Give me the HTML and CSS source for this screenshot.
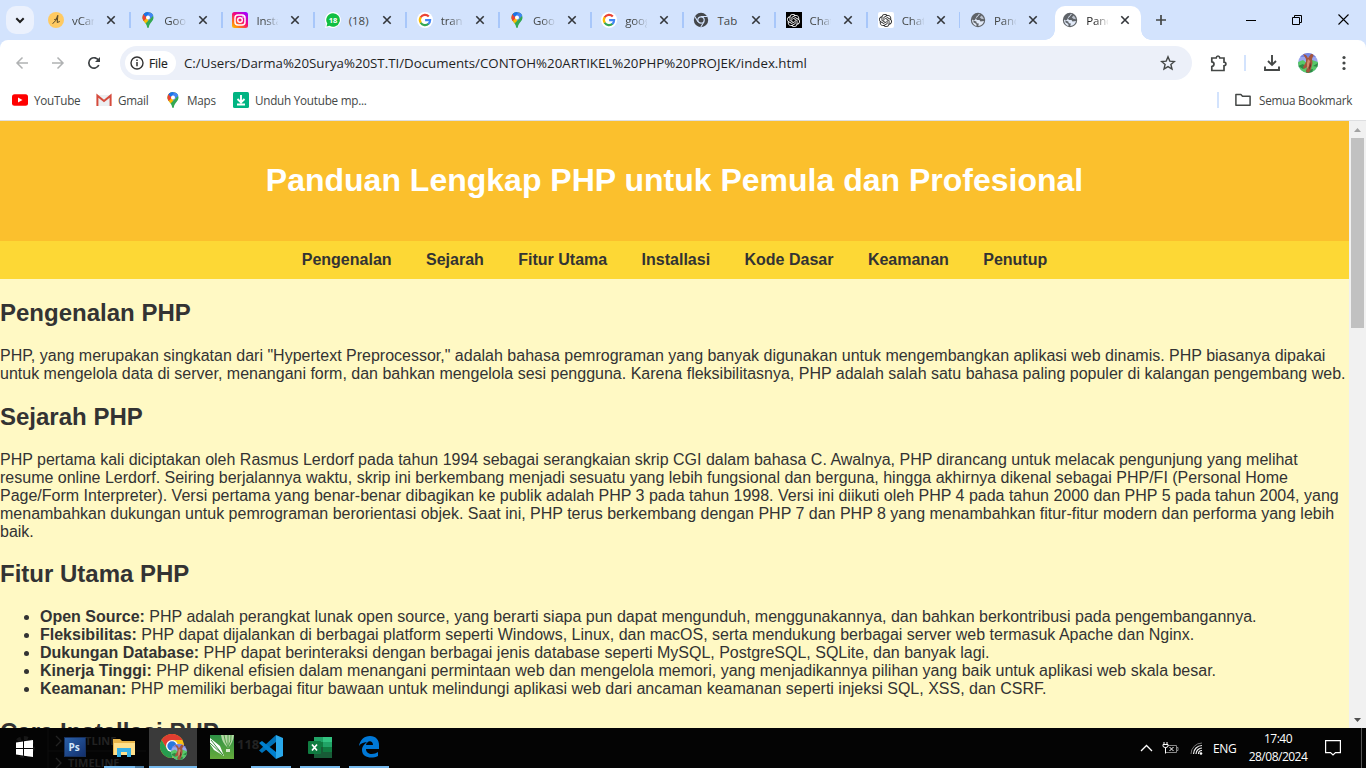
FILE: index.html
```html
<!DOCTYPE html>
<html lang="id">
<head>
<meta charset="utf-8">
<title>Panduan Lengkap PHP</title>
<link rel="stylesheet" href="styles.css">
</head>
<body>
<svg class="defs" width="0" height="0">
  <symbol id="maps" viewBox="0 0 16 16">
    <clipPath id="pin"><path d="M8 0a5.5 5.5 0 0 0-5.5 5.5C2.500 9.300 6.300 10.500 7.200 15.200Q8 17 8.800 15.200C9.700 10.500 13.500 9.300 13.500 5.500A5.500 5.500 0 0 0 8 0z"/></clipPath>
    <g clip-path="url(#pin)"><path fill="#34a853" d="M0 0h16v16H0z"/><path fill="#fbbc04" d="M0 12 11 0 5 0 0 7z"/><path fill="#fbbc04" d="M2 9 8 3l3 3-7 7z"/><path fill="#ea4335" d="M0 0h4l4.500 4-6 6.500z"/><path fill="#4285f4" d="M3.800 1.500 5 0h9l-4 6L7.500 5z"/><path fill="#1a73e8" d="M3 2 6 5 9 1 6-1z"/><path fill="#4285f4" d="M8 6 12 1l2 2-6 6z"/></g><circle cx="8" cy="5.500" r="2" fill="#fff"/>
  </symbol>
  <symbol id="google" viewBox="0 0 16 16"><circle cx="8" cy="8" r="8" fill="#fff"/><g fill="none" stroke-width="2.200"><path stroke="#fbbc04" d="M3.900 11A5.100 5.100 0 0 1 3.900 5"/><path stroke="#ea4335" d="M3.700 5.300A5.100 5.100 0 0 1 11.800 4.500"/><path stroke="#34a853" d="M3.700 10.700A5.100 5.100 0 0 0 11.600 11.700"/><path stroke="#4285f4" d="M8.100 8.200H13.100A5.100 5.100 0 0 1 11.300 12"/></g></symbol>
  <symbol id="globe" viewBox="0 0 16 16"><circle cx="8" cy="8" r="7.200" fill="#5f6368"/><path fill="#e2eaf8" d="M10.200 1.800C7.500 2.200 8.500 3.500 7.300 4 6 4.500 6.500 6 5.500 6.300L7 8.100 9.500 8 10.500 9.500 13.900 9C13.500 11.800 11 14 8.300 13.900L8.800 11.500 6.800 11.300 6.300 9.600 4 8.700 2.100 7.400C1.800 10.500 4 13.200 6.500 13.900L6.300 12 3 10z"/><path fill="#e2eaf8" d="M9.800 5.200 11.800 3.500 13.500 6 13.800 7.300 11.200 6.800z" opacity=".7"/></symbol>
  <symbol id="openai" viewBox="0 0 24 24"><path fill="currentColor" d="M22.2819 9.8211a5.9847 5.9847 0 0 0-.5157-4.9108 6.0462 6.0462 0 0 0-6.5098-2.9A6.0651 6.0651 0 0 0 4.9807 4.1818a5.9847 5.9847 0 0 0-3.9977 2.9 6.0462 6.0462 0 0 0 .7427 7.0966 5.98 5.98 0 0 0 .511 4.9107 6.051 6.051 0 0 0 6.5146 2.9001A5.9847 5.9847 0 0 0 13.2599 24a6.0557 6.0557 0 0 0 5.7718-4.2058 5.9894 5.9894 0 0 0 3.9977-2.9001 6.0557 6.0557 0 0 0-.7475-7.0729zm-9.022 12.6081a4.4755 4.4755 0 0 1-2.8764-1.0408l.1419-.0804 4.7783-2.7582a.7948.7948 0 0 0 .3927-.6813v-6.7369l2.02 1.1686a.071.071 0 0 1 .038.052v5.5826a4.504 4.504 0 0 1-4.4945 4.4944zm-9.6607-4.1254a4.4708 4.4708 0 0 1-.5346-3.0137l.142.0852 4.783 2.7582a.7712.7712 0 0 0 .7806 0l5.8428-3.3685v2.3324a.0804.0804 0 0 1-.0332.0615L9.74 19.9502a4.4992 4.4992 0 0 1-6.1408-1.6464zM2.3408 7.8956a4.485 4.485 0 0 1 2.3655-1.9728V11.6a.7664.7664 0 0 0 .3879.6765l5.8144 3.3543-2.0201 1.1685a.0757.0757 0 0 1-.071 0l-4.8303-2.7865A4.504 4.504 0 0 1 2.3408 7.872zm16.5963 3.8558L13.1038 8.364 15.1192 7.2a.0757.0757 0 0 1 .071 0l4.8303 2.7913a4.4944 4.4944 0 0 1-.6765 8.1042v-5.6772a.79.79 0 0 0-.407-.667zm2.0107-3.0231l-.142-.0852-4.7735-2.7818a.7759.7759 0 0 0-.7854 0L9.409 9.2297V6.8974a.0662.0662 0 0 1 .0284-.0615l4.8303-2.7866a4.4992 4.4992 0 0 1 6.6802 4.66zM8.3065 12.863l-2.02-1.1638a.0804.0804 0 0 1-.038-.0567V6.0742a4.4992 4.4992 0 0 1 7.3757-3.4537l-.142.0805L8.704 5.459a.7948.7948 0 0 0-.3927.6813zm1.0976-2.3654l2.602-1.4998 2.6069 1.4998v2.9994l-2.5974 1.4997-2.6067-1.4997Z"/></symbol>
  <symbol id="x" viewBox="0 0 10 10"><path d="M1.300 1.300 8.700 8.700M8.700 1.300 1.300 8.700" stroke="currentColor" stroke-width="1.600" fill="none"/></symbol>
  <symbol id="photo" viewBox="0 0 20 20"><clipPath id="pc"><circle cx="10" cy="10" r="10"/></clipPath><g clip-path="url(#pc)"><path fill="#9aa6ee" d="M0 0h20v20H0z"/><path fill="#7785e0" d="M0 0h20v4H0z"/><path fill="#57c868" d="M0 9 5 7l4 3 5-3 6 2v11H0z"/><path fill="#2f8a45" d="M0 13l5-2 3 3-3 2zM15 13l5-3v4zM8 17l7-1-1 4H8z"/><path fill="#a4553d" d="M5 1 8 2 10 5 13 1 16 1 14 6 14.500 10 13 16 11 20 8 19 9 14 6 16 5 14 8 9 8 6z"/><path fill="#d48a6b" d="M10 6l2 2-1 5-2 3 0-6z"/><path fill="#5c2a22" d="M12 9l1 4-2 4z"/></g></symbol>
</svg>

<header class="tabstrip">
  <div class="search-tabs"><svg width="10" height="7" viewBox="0 0 10 7"><path d="M1.300 1.300 5 5 8.700 1.300" fill="none" stroke="#1f1f1f" stroke-width="2"/></svg></div>
  <div class="tabs">
    <div class="tab"><svg class="fav" viewBox="0 0 16 16"><circle cx="8" cy="8" r="8" fill="#ffca62"/><path d="M4.500 11.500C7 10.500 8.500 7 9.700 3.300M9.900 3.300 9.200 10.500 11.800 9.500M6 8C7 6.800 8 7.300 9.200 8.200" fill="none" stroke="#584726"/></svg><span class="label">vCard</span><svg class="close"><use href="#x"/></svg><i class="sep"></i></div>
    <div class="tab"><svg class="fav"><use href="#maps"/></svg><span class="label">Goog</span><svg class="close"><use href="#x"/></svg><i class="sep"></i></div>
    <div class="tab"><svg class="fav" viewBox="0 0 16 16"><defs><linearGradient id="ig" x1="0" y1="1" x2=".8" y2="0"><stop offset="0" stop-color="#ffc800"/><stop offset=".3" stop-color="#ff6a20"/><stop offset=".6" stop-color="#f5077d"/><stop offset="1" stop-color="#a400ff"/></linearGradient></defs><rect width="16" height="16" rx="2.500" fill="url(#ig)"/><rect x="3" y="3" width="10" height="10" rx="3" fill="none" stroke="#fff" stroke-width="1.500"/><circle cx="8" cy="8" r="2.300" fill="none" stroke="#fff" stroke-width="1.400"/><circle cx="11" cy="5" r=".8" fill="#fff"/></svg><span class="label">Insta</span><svg class="close"><use href="#x"/></svg><i class="sep"></i></div>
    <div class="tab"><svg class="fav" viewBox="0 0 16 16"><path fill="#fff" d="M8 0a8 8 0 1 1-4 15L0 16 1 12A8 8 0 0 1 8 0z"/><path fill="#11bf42" d="M8 1.200a6.800 6.800 0 1 1-3.500 12.600L1.500 14.500 2.300 11.600A6.800 6.800 0 0 1 8 1.200z"/><text class="badge" x="8" y="11" text-anchor="middle">18</text></svg><span class="label fit">(18)</span><svg class="close"><use href="#x"/></svg><i class="sep"></i></div>
    <div class="tab"><svg class="fav"><use href="#google"/></svg><span class="label">tran</span><svg class="close"><use href="#x"/></svg><i class="sep"></i></div>
    <div class="tab"><svg class="fav"><use href="#maps"/></svg><span class="label">Goog</span><svg class="close"><use href="#x"/></svg><i class="sep"></i></div>
    <div class="tab"><svg class="fav"><use href="#google"/></svg><span class="label">goog</span><svg class="close"><use href="#x"/></svg><i class="sep"></i></div>
    <div class="tab"><svg class="fav" viewBox="0 0 16 16"><circle cx="8" cy="8" r="7.200" fill="#44474b"/><circle cx="8" cy="8" r="3.200" fill="#44474b" stroke="#d3e3fd" stroke-width="1.200"/><path d="M8 4.500H14.500M5 9.800 1.800 4.500M11 9.800 7.800 15" stroke="#d3e3fd" stroke-width="1.100"/></svg><span class="label fit">Tab</span><svg class="close"><use href="#x"/></svg><i class="sep"></i></div>
    <div class="tab"><span class="fav gpt dark"><svg width="13" height="13"><use href="#openai"/></svg></span><span class="label">Chat</span><svg class="close"><use href="#x"/></svg><i class="sep"></i></div>
    <div class="tab"><span class="fav gpt"><svg width="13" height="13"><use href="#openai"/></svg></span><span class="label">Chat</span><svg class="close"><use href="#x"/></svg><i class="sep"></i></div>
    <div class="tab"><svg class="fav"><use href="#globe"/></svg><span class="label">Pand</span><svg class="close"><use href="#x"/></svg></div>
    <div class="tab active"><svg class="fav"><use href="#globe"/></svg><span class="label">Pand</span><svg class="close"><use href="#x"/></svg></div>
  </div>
  <svg class="newtab" width="12" height="12" viewBox="0 0 12 12"><path d="M6 1v10M1 6h10" stroke="#444746" stroke-width="1.700"/></svg>
  <div class="window-buttons">
    <svg width="10" height="11" viewBox="0 0 10 11"><path d="M0 6.500h10" stroke="#000"/></svg>
    <svg width="10" height="11" viewBox="0 0 10 11"><path d="M.5 3.500h7v7h-7zM2.500 3.500v-2h7v7h-2" fill="none" stroke="#000"/></svg>
    <svg width="11" height="11" viewBox="0 0 11 11"><path d="M.5 .5l10 10M10.500 .5l-10 10" stroke="#000" stroke-width="1.100"/></svg>
  </div>
</header>

<section class="toolbar">
  <div class="address-row">
    <svg class="back" width="14" height="14" viewBox="0 0 14 14"><path d="M13 7H2M7.500 1.500 2 7l5.500 5.500" fill="none" stroke="#b0b2b3" stroke-width="1.500"/></svg>
    <svg class="forward" width="14" height="14" viewBox="0 0 14 14"><path d="M1 7h11M6.500 1.500 12 7l-5.500 5.500" fill="none" stroke="#b0b2b3" stroke-width="1.500"/></svg>
    <svg class="reload" width="14" height="14" viewBox="0 0 14 14"><path d="M11.800 9A5.200 5.200 0 1 1 11.700 4.700" fill="none" stroke="#3c4043" stroke-width="1.700"/><path d="M8 6h5V1z" fill="#3c4043"/></svg>
    <div class="omnibox">
      <div class="chip"><svg width="14" height="14" viewBox="0 0 14 14"><circle cx="7" cy="7" r="6" fill="none" stroke="#333" stroke-width="1.400"/><path d="M7 6v4.300M7 3.500v1.400" stroke="#333" stroke-width="1.500"/></svg><span class="chip-text">File</span></div>
      <span class="url">C:/Users/Darma%20Surya%20ST.TI/Documents/CONTOH%20ARTIKEL%20PHP%20PROJEK/index.html</span>
      <svg class="star" width="16" height="16" viewBox="0 0 16 16"><path d="M8 1.800 9.800 6.100 14.400 6.500 10.900 9.500 12 14 8 11.600 4 14 5.100 9.500 1.600 6.500 6.200 6.100z" fill="none" stroke="#444746" stroke-width="1.400"/></svg>
    </div>
    <svg class="puzzle" width="17" height="17" viewBox="0 0 17 17"><path d="M1.800 3h4.400Q6.500 1 8 1T9.800 3H14V7.200Q16 7.500 16 9T14 10.800V15.500H1.800V11.500Q4 11 4 9T1.800 6.800z" fill="none" stroke="#444746" stroke-width="1.700"/></svg>
    <i class="divider"></i>
    <svg class="download" width="16" height="16" viewBox="0 0 16 16"><path d="M8 0v9.500M4 6 8 10l4-4M1 11.500V15h14v-3.500" fill="none" stroke="#444746" stroke-width="1.900"/></svg>
    <svg class="avatar" width="20" height="20"><use href="#photo"/></svg>
    <svg class="dots" width="4" height="16" viewBox="0 0 4 16" fill="#444746"><circle cx="2" cy="2.500" r="1.600"/><circle cx="2" cy="8" r="1.600"/><circle cx="2" cy="13.500" r="1.600"/></svg>
  </div>
  <div class="bookmarks">
    <svg width="16" height="16" viewBox="0 0 16 16"><rect y="2.200" width="16" height="11.600" rx="2.500" fill="#f00"/><path d="M6 5.500 10.500 8 6 10.500z" fill="#fff"/></svg><span class="bm b1">YouTube</span>
    <svg width="16" height="16" viewBox="0 0 16 16"><path fill="#eceff1" d="M1 3h14v11H1z"/><path d="M1.400 14V3.700L8 9 14.600 3.700V14" fill="none" stroke="#d54b3d" stroke-width="2"/></svg><span class="bm b2">Gmail</span>
    <svg width="16" height="16"><use href="#maps"/></svg><span class="bm b3">Maps</span>
    <svg width="16" height="16" viewBox="0 0 16 16"><rect width="16" height="16" rx="1.500" fill="#00b482"/><path d="M8 3v6M4.500 7 8 10.500 11.500 7M4 12.500h8" fill="none" stroke="#fff" stroke-width="1.900"/></svg><span class="bm b4">Unduh Youtube mp...</span>
    <i class="divider"></i>
    <svg class="folder" width="16" height="14" viewBox="0 0 16 14"><path d="M.9 1.500h5L7.500 3.300h7.600v9H.9z" fill="none" stroke="#444746" stroke-width="1.500" stroke-linejoin="round"/></svg><span class="bm b5">Semua Bookmark</span>
  </div>
</section>

<main class="viewport">
  <article class="page">
    <header class="hero"><h1>Panduan Lengkap PHP untuk Pemula dan Profesional</h1></header>
    <nav class="menu"><a>Pengenalan</a><a>Sejarah</a><a>Fitur Utama</a><a>Installasi</a><a>Kode Dasar</a><a>Keamanan</a><a>Penutup</a></nav>
    <h2>Pengenalan PHP</h2>
    <p>PHP, yang merupakan singkatan dari "Hypertext Preprocessor," adalah bahasa pemrograman yang banyak digunakan untuk mengembangkan aplikasi web dinamis. PHP biasanya dipakai<br>untuk mengelola data di server, menangani form, dan bahkan mengelola sesi pengguna. Karena fleksibilitasnya, PHP adalah salah satu bahasa paling populer di kalangan pengembang web.</p>
    <h2>Sejarah PHP</h2>
    <p>PHP pertama kali diciptakan oleh Rasmus Lerdorf pada tahun 1994 sebagai serangkaian skrip CGI dalam bahasa C. Awalnya, PHP dirancang untuk melacak pengunjung yang melihat<br>resume online Lerdorf. Seiring berjalannya waktu, skrip ini berkembang menjadi sesuatu yang lebih fungsional dan berguna, hingga akhirnya dikenal sebagai PHP/FI (Personal Home<br>Page/Form Interpreter). Versi pertama yang benar-benar dibagikan ke publik adalah PHP 3 pada tahun 1998. Versi ini diikuti oleh PHP 4 pada tahun 2000 dan PHP 5 pada tahun 2004, yang<br>menambahkan dukungan untuk pemrograman berorientasi objek. Saat ini, PHP terus berkembang dengan PHP 7 dan PHP 8 yang menambahkan fitur-fitur modern dan performa yang lebih<br>baik.</p>
    <h2>Fitur Utama PHP</h2>
    <ul>
      <li><strong>Open Source:</strong> PHP adalah perangkat lunak open source, yang berarti siapa pun dapat mengunduh, menggunakannya, dan bahkan berkontribusi pada pengembangannya.</li>
      <li><strong>Fleksibilitas:</strong> PHP dapat dijalankan di berbagai platform seperti Windows, Linux, dan macOS, serta mendukung berbagai server web termasuk Apache dan Nginx.</li>
      <li><strong>Dukungan Database:</strong> PHP dapat berinteraksi dengan berbagai jenis database seperti MySQL, PostgreSQL, SQLite, dan banyak lagi.</li>
      <li><strong>Kinerja Tinggi:</strong> PHP dikenal efisien dalam menangani permintaan web dan mengelola memori, yang menjadikannya pilihan yang baik untuk aplikasi web skala besar.</li>
      <li><strong>Keamanan:</strong> PHP memiliki berbagai fitur bawaan untuk melindungi aplikasi web dari ancaman keamanan seperti injeksi SQL, XSS, dan CSRF.</li>
    </ul>
    <h2>Cara Installasi PHP</h2>
  </article>
  <aside class="scrollbar">
    <svg width="7" height="4" viewBox="0 0 7 4"><path d="M0 4 3.500 0 7 4z" fill="#a3a3a3"/></svg>
    <div class="thumb"></div>
    <svg class="down" width="7" height="4" viewBox="0 0 7 4"><path d="M0 0 3.500 4 7 0z" fill="#505050"/></svg>
  </aside>
</main>

<footer class="taskbar">
  <div class="ghosts"><span class="g2">OUTLINE</span><span class="g4">TIMELINE</span><span class="g5">118</span><svg class="g6" width="130" height="40" viewBox="0 0 130 40"><circle cx="8" cy="19" r="9" fill="none" stroke="#171717" stroke-width="4" stroke-dasharray="4 3"/><path d="M40 8l5 5-5 5M40 30l5 5-5 5" fill="none" stroke="#222" stroke-width="1.300"/><path d="M32 0v40M32 23h98" stroke="#0c0c0c"/></svg></div>
  <div class="start"><svg width="17" height="17" viewBox="0 0 17 17" fill="#fff"><path d="M0 2.400 7 1.400V8H0zM8 1.250 17 0V8H8zM0 9H7v6.600L0 14.600zM8 9h9v8L8 15.750z"/></svg></div>
  <div class="apps">
    <div class="app"><svg width="22" height="20" viewBox="0 0 22 20"><defs><linearGradient id="ps" x1="0" y1="0" x2="1" y2="1"><stop stop-color="#2b62aa"/><stop offset="1" stop-color="#122e6b"/></linearGradient></defs><rect x=".5" y=".5" width="21" height="19" fill="url(#ps)" stroke="#17315f"/><text class="ps" x="4.500" y="13.500">Ps</text></svg></div>
    <div class="app"><svg class="explorer" width="22" height="19" viewBox="0 0 22 19"><path fill="#e8b64c" d="M0 1h7l2 2h13v14H0z"/><path fill="#fee08b" d="M1 5h21v12H1z"/><path fill="#35b0e8" d="M4 10h14v9h-4v-5H8v5H4z"/></svg><i class="bar group"></i></div>
    <div class="app current"><svg class="chrome" width="27" height="27" viewBox="0 0 27 27"><circle cx="12" cy="12" r="12" fill="#fbc116"/><path fill="#df3d31" d="M1.600 6A12 12 0 0 1 22.400 6H12L7 15z"/><path fill="#279c50" d="M1.600 6A12 12 0 0 0 12 24L17 15 7 15z"/><circle cx="12" cy="12" r="6" fill="#fff"/><circle cx="12" cy="12" r="4.700" fill="#2878dd"/><svg x="11" y="10" width="16" height="16"><use href="#photo"/></svg></svg><i class="bar wide"></i></div>
    <div class="app"><svg width="24" height="24" viewBox="0 0 24 24"><defs><linearGradient id="cd" x2="0" y2="1"><stop stop-color="#2e9146"/><stop offset="1" stop-color="#65aa3b"/></linearGradient></defs><path fill="url(#cd)" d="M0 0h24v24H0z"/><path fill="#fff" d="M0 3 10 11 14 21 4 15 0 9z"/><path d="M1 5 13 20M0 8l13 12" stroke="#3b8d3d"/><path fill="#b5d8a5" d="M11 0h13Q23 8 18 13 12 8 11 0z"/><path d="M14 0q1 8 4 12 4-6 3-12M18 0v13" fill="none" stroke="#4f9f48"/><path fill="#d5e9c9" d="M16 14h4v3h-4z"/></svg></div>
    <div class="app"><svg width="24" height="24" viewBox="0 0 24 24"><path fill="#0072b9" d="M17 0v7L3 18 0 15.500z"/><path fill="#0080cf" d="M0 8 3 6l14 11v7L0 8z"/><path fill="#29a8eb" d="M17 0 24 3v18l-7 3z"/></svg><i class="bar"></i></div>
    <div class="app"><svg width="24" height="23" viewBox="0 0 24 23"><path fill="#21a366" d="M6 1h18v10H6z"/><path fill="#33c481" d="M15 1h9v5h-9z"/><path fill="#107c41" d="M6 6h18v10H6z"/><path fill="#21a366" d="M15 6h9v5h-9z"/><path fill="#185c37" d="M6 11h9v5h9v6H6z"/><rect y="5" width="13" height="13" rx="1" fill="#107c41"/><path d="M4 8.500 9 14.500M9 8.500 4 14.500" stroke="#fff" stroke-width="1.700"/></svg><i class="bar"></i></div>
    <div class="app"><svg width="20" height="22" viewBox="0 0 20 22"><path fill="#0078d7" d="M0 10C1 4 5 0 11 0c6 0 9 4 9 9v4H7c0 6 8 6 12 3v4C13 23 3 22 3 14 3 10 6 7 9 6 5 6 2 7 0 10zM7 9h7c0-5-6-5-7 0z"/></svg><i class="bar"></i></div>
  </div>
  <div class="tray">
    <svg class="up" width="13" height="8" viewBox="0 0 13 8"><path d="M1 7 6.500 1.500 12 7" fill="none" stroke="#fff" stroke-width="1.300"/></svg>
    <svg class="battery" width="17" height="13" viewBox="0 0 17 13"><path d="M6 3.500h8.500v7H3.500M14.500 5.500h1.500v3h-1.500" fill="none" stroke="#888"/><path d="M2 0v2.500M5 0v2.500M1 2.500h5V4Q6 5.500 3.500 5.500T1 4zM3.500 5.500v6M7.500 5l4 4M11.500 5l-4 4" fill="none" stroke="#fff"/></svg>
    <svg class="wifi" width="13" height="13" viewBox="0 0 13 13" fill="none"><path d="M1 12A11 11 0 0 1 12 1" stroke="#777"/><path d="M3.500 12A8.500 8.500 0 0 1 12 3.500M6 12a6 6 0 0 1 6-6M8.500 12A3.500 3.500 0 0 1 12 8.500" stroke="#eee" stroke-width="1.200"/><circle cx="11" cy="11.500" r="1.300" fill="#fff"/></svg>
    <span class="lang">ENG</span>
    <div class="clock"><span class="time">17:40</span><span class="date">28/08/2024</span></div>
    <svg class="notice" width="16" height="16" viewBox="0 0 16 16"><path d="M.6 .6h14.800v12H10.500L8 15 5.500 12.600H.6z" fill="none" stroke="#fff" stroke-width="1.200"/></svg>
    <i class="peek"></i>
  </div>
</footer>
</body>
</html>
```
FILE: styles.css
```css
* { box-sizing: border-box; }
body { margin: 0; width: 1366px; height: 768px; overflow: hidden; display: flex; flex-direction: column; background: #d3e3fd; font-family: "Open Sans", "Noto Sans", sans-serif; font-size: 12px; color: #444746; }
svg { display: block; flex: none; }
.defs { width: 0; height: 0; flex: none; }

.tabstrip { flex: none; height: 40px; display: flex; align-items: flex-start; background: #d3e3fd; }
.search-tabs { width: 28px; height: 28px; margin: 6px 4.600px 0 6px; border-radius: 10px; background: #ebf1fd; display: flex; align-items: center; justify-content: center; }
.tabs { display: flex; height: 40px; }
.tab { width: 92.200px; height: 40px; padding-left: 9.500px; display: flex; align-items: center; }
.fav { width: 16px; height: 16px; flex: none; }
.label { width: 22px; margin-left: 8px; padding-top: 1px; overflow: hidden; white-space: nowrap; font-size: 11.500px; line-height: 18px; letter-spacing: -.2px; mask-image: linear-gradient(90deg, #000 40%, transparent 105%); }
.label.fit { mask-image: none; letter-spacing: 0; overflow: visible; }
.close { width: 10px; height: 10px; margin-left: 12px; color: #33363a; }
.sep { width: 2px; height: 16px; margin-left: 13px; background: #a8c7fa; }
.gpt { display: flex; align-items: center; justify-content: center; border-radius: 2px; background: #fff; color: #222; }
.gpt.dark { background: #000; color: #fff; border-radius: 0; }
.badge { font: 700 7.500px "Open Sans", sans-serif; fill: #fff; }
.tab.active { width: 86px; height: 34px; margin: 6px 0 0 2.200px; padding: 0 0 6px 7.500px; background: #fff; border-radius: 10px 10px 0 0; position: relative; color: #1f1f1f; }
.tab.active::before, .tab.active::after { content: ""; position: absolute; bottom: 0; width: 10px; height: 10px; }
.tab.active::before { left: -10px; background: radial-gradient(circle at 0 0, transparent 9.500px, #fff 10px); }
.tab.active::after { right: -10px; background: radial-gradient(circle at 100% 0, transparent 9.500px, #fff 10px); }
.newtab { margin: 14px 0 0 14px; }
.window-buttons { margin: 14px 17px 0 auto; display: flex; gap: 36px; }

.toolbar { flex: none; height: 81px; background: #fff; border-radius: 8px 8px 0 0; border-bottom: 1px solid #dedfe1; }
.address-row { height: 46px; display: flex; align-items: center; }
.back { margin-left: 15px; }
.forward { margin-left: 22px; }
.reload { margin-left: 22px; }
.omnibox { width: 1072px; height: 34px; margin-left: 19px; padding: 0 16px 0 5px; border-radius: 17px; background: #ecf0f9; display: flex; align-items: center; color: #1f1f1f; }
.chip { width: 51px; height: 24px; padding-left: 5px; border-radius: 12px; background: #fff; display: flex; align-items: center; gap: 5px; }
.chip-text { font-size: 12px; letter-spacing: -.1px; -webkit-text-stroke: .2px #1f1f1f; }
.url { margin-left: 8px; font-size: 13.300px; letter-spacing: -.012px; white-space: nowrap; }
.star { margin-left: auto; }
.puzzle { margin-left: 18px; }
.divider { width: 2px; height: 16px; background: #d3e3fd; flex: none; }
.address-row .divider { margin-left: 17px; }
.download { margin-left: 18px; }
.avatar { margin-left: 18px; }
.dots { margin-left: 24px; }
.bookmarks { height: 28px; display: flex; align-items: center; padding-left: 12px; white-space: nowrap; }
.bm { margin-left: 6px; font-size: 11.700px; letter-spacing: -.24px; }
.b1 { width: 62px; }
.b2 { width: 47px; }
.b3 { width: 46px; margin-left: 6px; }
.bookmarks .divider { margin-left: auto; }
.folder { margin-left: 16px; }
.b5 { width: 93px; margin: 0 14px 0 8px; }

.viewport { flex: none; height: 607px; display: flex; overflow: hidden; }
.page { width: 1349px; flex: none; background: #fff9c4; color: #333; font: 16px/18px "Liberation Sans", Arial, sans-serif; white-space: nowrap; }
.hero { height: 120px; padding: 20px; background: #fbc02d; color: #fff; text-align: center; display: flow-root; }
h1 { margin: 21.440px 0; font-size: 32px; line-height: 37px; }
.menu { height: 38px; margin-bottom: 20px; padding: 10px; background: #fdd835; display: flex; justify-content: center; gap: 34.450px; font-weight: 700; }
h2 { margin: 0 0 21px; font-size: 24px; line-height: 27px; }
.page p { margin: 0 0 19.600px; }
.page ul { margin: 0 0 19.600px; padding-left: 40px; }
.scrollbar { width: 17px; background: #f1f1f1; display: flex; flex-direction: column; align-items: center; padding: 7px 0 6px; }
.thumb { width: 13px; height: 190px; margin-top: 6px; background: #c1c1c1; }
.down { margin-top: auto; }

.taskbar { flex: none; height: 40px; background: #040404; color: #fff; display: flex; position: relative; }
.ghosts { color: #222; font: 700 11px/14px "Open Sans", sans-serif; }
.ghosts > * { position: absolute; }
.g2 { left: 68px; top: 6px; }
.g4 { left: 68px; top: 28px; }
.g5 { left: 237px; top: 9px; font-size: 13px; }
.g6 { left: 16px; top: 0; }
.start { width: 48px; height: 40px; display: flex; align-items: center; justify-content: center; position: relative; }
.apps { margin-left: 3px; display: flex; gap: 1px; position: relative; }
.app { width: 48px; height: 40px; display: grid; grid-template-rows: 38px 2px; justify-items: center; align-items: center; }
.ps { font: 700 10px "Open Sans", sans-serif; fill: #d5e8fa; }
.bar { width: 40px; height: 2px; background: #76b9ed; }
.bar.wide { width: 48px; }
.bar.group { background: linear-gradient(90deg, #76b9ed 31px, #4c7ca2 31px); }
.current { background: #3a3a3a; }
.tray { margin-left: auto; height: 40px; display: flex; align-items: center; white-space: nowrap; }
.battery { margin-left: 9px; }
.wifi { margin-left: 11px; }
.lang { width: 24px; margin-left: 10px; font-size: 12px; letter-spacing: -.4px; }
.clock { width: 60px; margin-left: 11px; display: flex; flex-direction: column; align-items: center; line-height: 18px; font-size: 12px; letter-spacing: -.5px; }
.notice { margin-left: 17px; }
.peek { width: 1px; height: 40px; margin: 0 4px 0 20px; background: #555; }
```
